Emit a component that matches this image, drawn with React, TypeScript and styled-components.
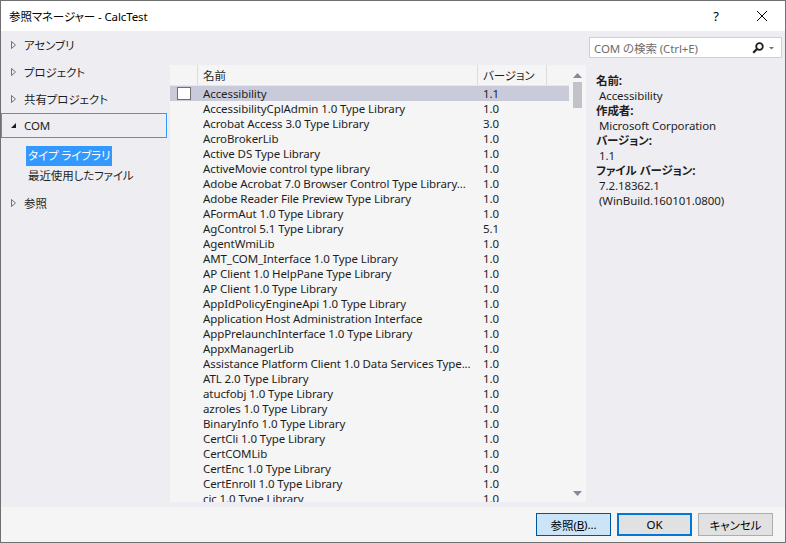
import React from "react";
import styled, { createGlobalStyle } from "styled-components";

const UI_FONT = `"Noto Sans", "Noto Sans CJK JP", sans-serif`;

const GlobalStyle = createGlobalStyle`
  html, body {
    margin: 0;
    padding: 0;
    background: #ffffff;
  }
  * {
    box-sizing: border-box;
  }
`;

const Window = styled.div`
  width: 786px;
  height: 543px;
  border: 1px solid #707070;
  display: flex;
  flex-direction: column;
  font-family: ${UI_FONT};
  font-size: 11.5px;
  letter-spacing: -0.1px;
  font-feature-settings: "palt";
  color: #1e1e1e;
  overflow: hidden;
`;

const TitleBar = styled.div`
  height: 30px;
  flex: none;
  background: #ffffff;
  display: flex;
  align-items: center;
  padding-left: 8px;
`;

const TitleText = styled.div`
  flex: 1;
  font-size: 11.5px;
  color: #000;
`;

const TitleButton = styled.div`
  width: 46px;
  height: 30px;
  display: flex;
  align-items: center;
  justify-content: center;
  font-size: 13px;
  color: #000;
`;

const Body = styled.div`
  flex: 1;
  background: #eeeef2;
  display: flex;
`;

const Nav = styled.div`
  width: 166px;
  padding-top: 1px;
  display: flex;
  flex-direction: column;
`;

const NavItem = styled.div<{ $active?: boolean }>`
  height: 25px;
  margin-bottom: 2px;
  display: flex;
  align-items: center;
  padding-left: 8px;
  gap: 7px;
  border: 1px solid ${(p) => (p.$active ? "#3399ff" : "transparent")};
`;

const SubList = styled.div`
  display: flex;
  flex-direction: column;
  padding: 6px 0 4px 25px;
`;

const SubItem = styled.div<{ $selected?: boolean }>`
  height: 20px;
  line-height: 20px;
  align-self: flex-start;
  padding: 0 2px;
  background: ${(p) => (p.$selected ? "#3399ff" : "transparent")};
  color: ${(p) => (p.$selected ? "#ffffff" : "#1e1e1e")};
`;

const Arrow = styled.span`
  width: 7px;
  display: inline-flex;
  justify-content: center;
`;

const ListPanel = styled.div`
  width: 416px;
  height: 437px;
  margin: 34px 0 0 3px;
  background: #f5f5f5;
  display: flex;
  overflow: hidden;
`;

const ListMain = styled.div`
  flex: 1;
  display: flex;
  flex-direction: column;
  overflow: hidden;
`;

const HeaderRow = styled.div`
  height: 21px;
  flex: none;
  display: grid;
  grid-template-columns: 28px 280px 69px 1fr;
  border-bottom: 1px solid #e6e6e6;
`;

const HeaderCell = styled.div<{ $divider?: boolean }>`
  display: flex;
  align-items: center;
  padding-left: 5px;
  border-right: ${(p) => (p.$divider ? "1px solid #dcdce0" : "none")};
  color: #1e1e1e;
`;

const Row = styled.div<{ $selected?: boolean }>`
  height: 15px;
  flex: none;
  display: grid;
  grid-template-columns: 28px 285px 1fr;
  align-items: center;
  background: ${(p) => (p.$selected ? "#cacbda" : "transparent")};
  line-height: 15px;
`;

const CheckCell = styled.div`
  display: flex;
  align-items: center;
  padding-left: 7px;
`;

const CheckBox = styled.div`
  width: 14px;
  height: 13px;
  background: #ffffff;
  border: 1px solid #707070;
`;

const NameCell = styled.div`
  padding-left: 5px;
  white-space: nowrap;
  overflow: hidden;
`;

const VersionCell = styled.div`
  white-space: nowrap;
`;

const ScrollBar = styled.div`
  width: 17px;
  display: flex;
  flex-direction: column;
  align-items: center;
  padding: 8px 0 6px;
`;

const ScrollThumb = styled.div`
  width: 9px;
  height: 26px;
  margin-top: 4px;
  background: #c2c3c9;
`;

const ScrollSpacer = styled.div`
  flex: 1;
`;

const RightPanel = styled.div`
  width: 193px;
  margin-left: 3px;
  padding-top: 6px;
  display: flex;
  flex-direction: column;
`;

const SearchBox = styled.div`
  height: 21px;
  background: #ffffff;
  border: 1px solid #cccedb;
  display: flex;
  align-items: center;
  padding: 0 4px 0 4px;
  color: #6d6d6d;
`;

const SearchText = styled.span`
  flex: 1;
`;

const Details = styled.div`
  padding: 15px 0 0 7px;
  line-height: 15px;
`;

const DetailLabel = styled.div`
  font-weight: bold;
  color: #1e1e1e;
`;

const DetailValue = styled.div`
  padding-left: 3px;
`;

const Footer = styled.div`
  height: 35px;
  flex: none;
  background: #f5f5f5;
  display: flex;
  align-items: center;
  justify-content: flex-end;
  gap: 6px;
  padding: 0 12px 0 0;
`;

const Button = styled.div<{ $variant?: "hover" | "default" | "plain" }>`
  width: 75px;
  height: 23px;
  display: flex;
  align-items: center;
  justify-content: center;
  background: ${(p) => (p.$variant === "hover" ? "#cce4f7" : "#e1e1e1")};
  border: 1px solid
    ${(p) =>
      p.$variant === "hover"
        ? "#005499"
        : p.$variant === "default"
        ? "#0078d7"
        : "#adadad"};
  box-shadow: ${(p) => (p.$variant === "default" ? "inset 0 0 0 1px #0078d7" : "none")};
  color: #000;
`;

const RightTri = () => (
  <svg width="5" height="8" viewBox="0 0 5 8">
    <path d="M0.5 0.5 L4.5 4 L0.5 7.5 Z" fill="none" stroke="#717171" strokeWidth="1" />
  </svg>
);

const DownTri = () => (
  <svg width="7" height="7" viewBox="0 0 7 7">
    <path d="M6 1 L6 6 L1 6 Z" fill="#1e1e1e" />
  </svg>
);

const rows: [string, string][] = [
  ["Accessibility", "1.1"],
  ["AccessibilityCplAdmin 1.0 Type Library", "1.0"],
  ["Acrobat Access 3.0 Type Library", "3.0"],
  ["AcroBrokerLib", "1.0"],
  ["Active DS Type Library", "1.0"],
  ["ActiveMovie control type library", "1.0"],
  ["Adobe Acrobat 7.0 Browser Control Type Library...", "1.0"],
  ["Adobe Reader File Preview Type Library", "1.0"],
  ["AFormAut 1.0 Type Library", "1.0"],
  ["AgControl 5.1 Type Library", "5.1"],
  ["AgentWmiLib", "1.0"],
  ["AMT_COM_Interface 1.0 Type Library", "1.0"],
  ["AP Client 1.0 HelpPane Type Library", "1.0"],
  ["AP Client 1.0 Type Library", "1.0"],
  ["AppIdPolicyEngineApi 1.0 Type Library", "1.0"],
  ["Application Host Administration Interface", "1.0"],
  ["AppPrelaunchInterface 1.0 Type Library", "1.0"],
  ["AppxManagerLib", "1.0"],
  ["Assistance Platform Client 1.0 Data Services Type...", "1.0"],
  ["ATL 2.0 Type Library", "1.0"],
  ["atucfobj 1.0 Type Library", "1.0"],
  ["azroles 1.0 Type Library", "1.0"],
  ["BinaryInfo 1.0 Type Library", "1.0"],
  ["CertCli 1.0 Type Library", "1.0"],
  ["CertCOMLib", "1.0"],
  ["CertEnc 1.0 Type Library", "1.0"],
  ["CertEnroll 1.0 Type Library", "1.0"],
  ["cic 1.0 Type Library", "1.0"],
];

const App = () => (
  <>
    <GlobalStyle />
    <Window>
      <TitleBar>
        <TitleText>参照マネージャー - CalcTest</TitleText>
        <TitleButton>?</TitleButton>
        <TitleButton>
          <svg width="10" height="10" viewBox="0 0 10 10">
            <path d="M0 0 L10 10 M10 0 L0 10" stroke="#000" strokeWidth="1" />
          </svg>
        </TitleButton>
      </TitleBar>
      <Body>
        <Nav>
          <NavItem>
            <Arrow><RightTri /></Arrow>アセンブリ
          </NavItem>
          <NavItem>
            <Arrow><RightTri /></Arrow>プロジェクト
          </NavItem>
          <NavItem>
            <Arrow><RightTri /></Arrow>共有プロジェクト
          </NavItem>
          <NavItem $active>
            <Arrow><DownTri /></Arrow>COM
          </NavItem>
          <SubList>
            <SubItem $selected>タイプ ライブラリ</SubItem>
            <SubItem>最近使用したファイル</SubItem>
          </SubList>
          <NavItem>
            <Arrow><RightTri /></Arrow>参照
          </NavItem>
        </Nav>
        <ListPanel>
          <ListMain>
            <HeaderRow>
              <HeaderCell $divider />
              <HeaderCell $divider>名前</HeaderCell>
              <HeaderCell $divider>バージョン</HeaderCell>
              <HeaderCell />
            </HeaderRow>
            {rows.map(([name, ver], i) => (
              <Row key={name} $selected={i === 0}>
                <CheckCell>{i === 0 && <CheckBox />}</CheckCell>
                <NameCell>{name}</NameCell>
                <VersionCell>{ver}</VersionCell>
              </Row>
            ))}
          </ListMain>
          <ScrollBar>
            <svg width="9" height="5" viewBox="0 0 9 5">
              <path d="M0 5 L4.5 0 L9 5 Z" fill="#868999" />
            </svg>
            <ScrollThumb />
            <ScrollSpacer />
            <svg width="9" height="5" viewBox="0 0 9 5">
              <path d="M0 0 L9 0 L4.5 5 Z" fill="#868999" />
            </svg>
          </ScrollBar>
        </ListPanel>
        <RightPanel>
          <SearchBox>
            <SearchText>COM の検索 (Ctrl+E)</SearchText>
            <svg width="12" height="12" viewBox="0 0 12 12">
              <circle cx="7.5" cy="4.5" r="3.3" fill="none" stroke="#1e1e1e" strokeWidth="1.8" />
              <path d="M5.2 6.8 L1.2 10.8" stroke="#1e1e1e" strokeWidth="2.2" />
            </svg>
            <svg width="11" height="10" viewBox="0 0 11 10" style={{ marginLeft: 2 }}>
              <path d="M3 4 L8 4 L5.5 6.5 Z" fill="#717171" />
            </svg>
          </SearchBox>
          <Details>
            <DetailLabel>名前:</DetailLabel>
            <DetailValue>Accessibility</DetailValue>
            <DetailLabel>作成者:</DetailLabel>
            <DetailValue>Microsoft Corporation</DetailValue>
            <DetailLabel>バージョン:</DetailLabel>
            <DetailValue>1.1</DetailValue>
            <DetailLabel>ファイル バージョン:</DetailLabel>
            <DetailValue>7.2.18362.1</DetailValue>
            <DetailValue>(WinBuild.160101.0800)</DetailValue>
          </Details>
        </RightPanel>
      </Body>
      <Footer>
        <Button $variant="hover">
          参照(<u>B</u>)...
        </Button>
        <Button $variant="default">OK</Button>
        <Button $variant="plain">キャンセル</Button>
      </Footer>
    </Window>
  </>
);

export default App;
